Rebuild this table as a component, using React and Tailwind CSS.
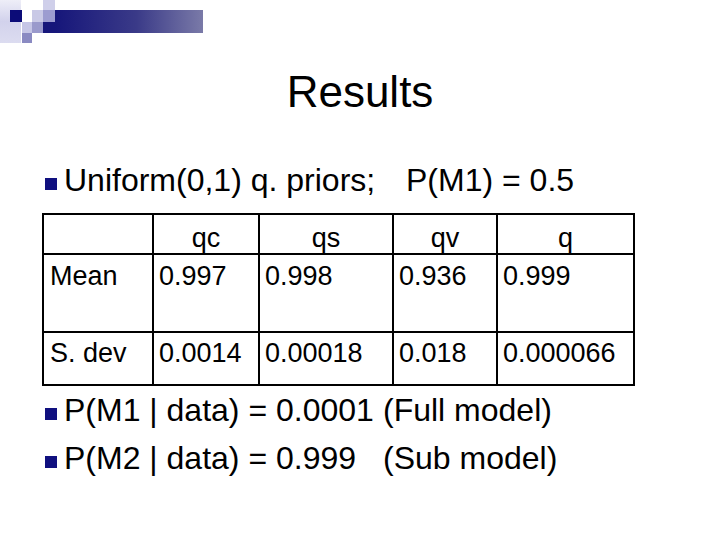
import React from 'react'

const font = "font-['Liberation_Sans',Arial,sans-serif]"

const headers = ['', 'qc', 'qs', 'qv', 'q']

const rows = [
  { label: 'Mean', values: ['0.997', '0.998', '0.936', '0.999'], pad: 'pt-[6px]' },
  { label: 'S. dev', values: ['0.0014', '0.00018', '0.018', '0.000066'], pad: 'pt-[5px]' },
]

function Logo() {
  return (
    <svg width="210" height="46" viewBox="0 0 210 46" className="absolute left-0 top-0">
      <defs>
        <linearGradient id="bar" x1="0" x2="1" y1="0" y2="0">
          <stop offset="0" stopColor="#16167a" />
          <stop offset="0.55" stopColor="#3a3a88" />
          <stop offset="1" stopColor="#7a7aa8" />
        </linearGradient>
        <linearGradient id="strip" x1="0" x2="0" y1="0" y2="1">
          <stop offset="0" stopColor="#eeeef8" />
          <stop offset="0.5" stopColor="#d2d2ec" />
          <stop offset="1" stopColor="#dcdcf0" />
        </linearGradient>
      </defs>
      <rect x="0" y="0" width="21" height="43" fill="url(#strip)" />
      <rect x="55" y="10" width="148" height="23" fill="url(#bar)" />
      <rect x="43" y="22" width="12" height="11" fill="#16167a" />
      <rect x="10" y="10" width="12" height="12" fill="#0c0c78" />
      <rect x="32" y="10" width="11" height="12" fill="#c9c9e6" />
      <rect x="43" y="0" width="12" height="10" fill="#cfcfea" />
      <rect x="43" y="10" width="12" height="12" fill="#9c9cd0" />
      <rect x="22" y="22" width="10" height="11" fill="#c6c6e6" />
      <rect x="32" y="22" width="11" height="11" fill="#9a9acc" />
      <rect x="22" y="33" width="10" height="10" fill="#8a8ac2" />
    </svg>
  )
}

function Bullet() {
  return <span className="mb-px mr-[7px] inline-block h-3 w-3 bg-[#10107f] align-baseline" />
}

export default function App() {
  return (
    <div className={`relative h-[540px] w-[720px] overflow-hidden bg-white text-black ${font}`}>
      <Logo />

      <h1 className="mt-[70px] text-center text-[44px] leading-[44px]">Results</h1>

      <p className="mt-[47px] whitespace-pre pl-[45px] text-[32px] leading-[38px]">
        <Bullet />
        <span className="inline-block w-[342px]">Uniform(0,1) q. priors;</span>
        <span>P(M1) = 0.5</span>
      </p>

      <div className="ml-[42px] mt-[14px] grid w-[593px] grid-cols-[110px_106px_134px_104px_135px] grid-rows-[40px_78px_51px] border-2 border-black text-[27px] leading-[30px]">
        {headers.map((h, i) => (
          <div
            key={i}
            className={`border-b-2 border-black pt-[8px] text-center ${i < 4 ? 'border-r-2' : ''}`}
          >
            {h}
          </div>
        ))}
        {rows.map((row, r) => (
          <React.Fragment key={row.label}>
            <div className={`border-r-2 border-black pl-[6px] ${row.pad} ${r === 0 ? 'border-b-2' : ''}`}>
              {row.label}
            </div>
            {row.values.map((v, i) => (
              <div
                key={i}
                className={`border-black pl-[5px] ${row.pad} ${i < 3 ? 'border-r-2' : ''} ${r === 0 ? 'border-b-2' : ''}`}
              >
                {v}
              </div>
            ))}
          </React.Fragment>
        ))}
      </div>

      <div className="whitespace-pre pl-[45px] text-[32px] leading-[48px]">
        <p>
          <Bullet />
          <span className="inline-block w-[319px]">P(M1 | data) = 0.0001</span>
          <span>(Full model)</span>
        </p>
        <p>
          <Bullet />
          <span className="inline-block w-[319px]">P(M2 | data) = 0.999</span>
          <span>(Sub model)</span>
        </p>
      </div>
    </div>
  )
}
